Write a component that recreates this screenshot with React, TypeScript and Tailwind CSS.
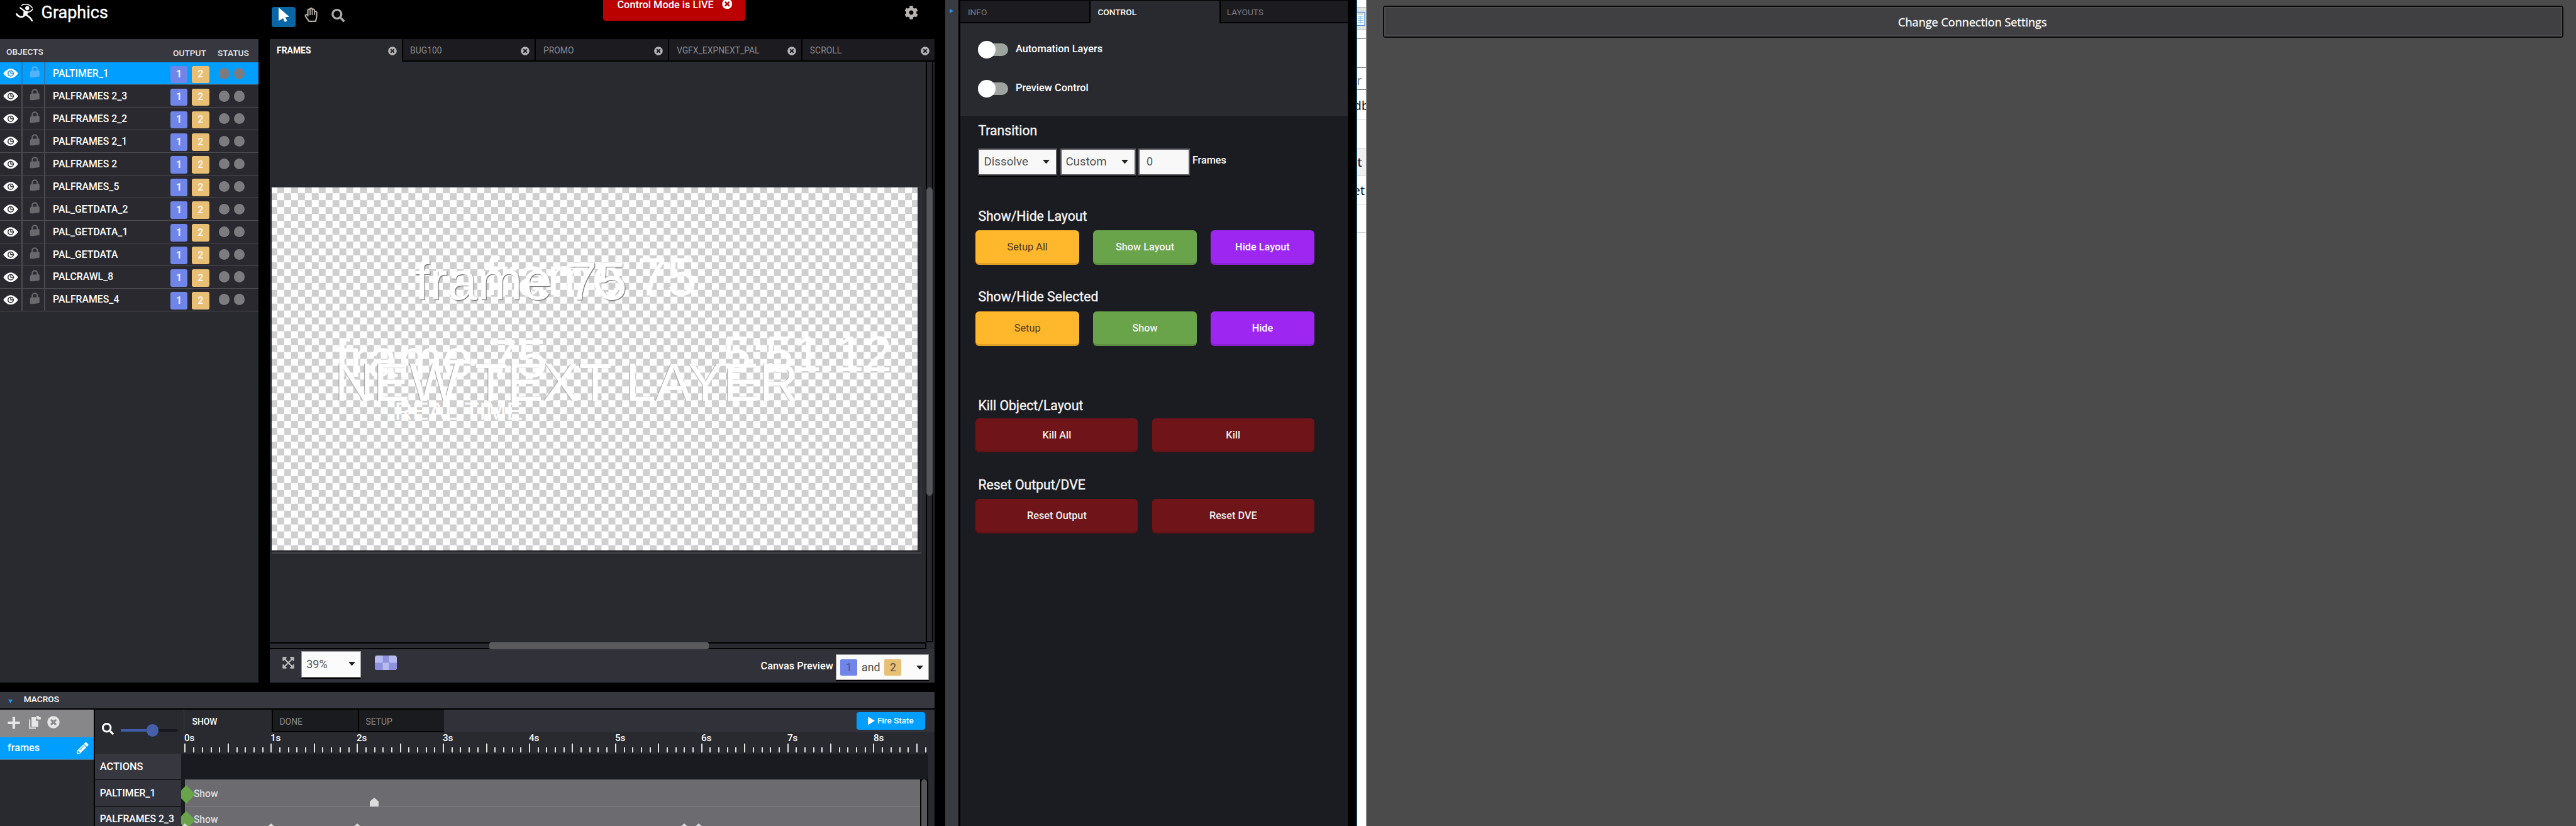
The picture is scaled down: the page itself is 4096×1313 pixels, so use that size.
import React from "react";
import {
  FaCog,
  FaExpandArrowsAlt,
  FaPencilAlt,
  FaPlus,
  FaRegHandPaper,
  FaSearch,
  FaTimesCircle,
} from "react-icons/fa";

const objects = [
  "PALTIMER_1",
  "PALFRAMES 2_3",
  "PALFRAMES 2_2",
  "PALFRAMES 2_1",
  "PALFRAMES 2",
  "PALFRAMES_5",
  "PAL_GETDATA_2",
  "PAL_GETDATA_1",
  "PAL_GETDATA",
  "PALCRAWL_8",
  "PALFRAMES_4",
];

function Runner() {
  return (
    <svg viewBox="0 0 33 33" className="h-[28px] w-[28.5px] shrink-0" fill="none" stroke="#fff" strokeLinecap="round" strokeLinejoin="round">
      <path d="M11 3C15 -0.5 26 0 31 8" strokeWidth="1.8" />
      <circle cx="21.3" cy="8.300" r="3.800" fill="#fff" stroke="none" />
      <path d="M8 7.500L16 13.500" strokeWidth="2.600" />
      <path d="M31 10.500C29 14 25 15.500 21 16" strokeWidth="2.200" />
      <path d="M15.500 13.500L22 15L20 20.500L15 22Z" fill="#fff" strokeWidth="2.200" />
      <path d="M15.500 22.500C12 26 5 25.500 1.500 19.500" strokeWidth="3.200" />
      <path d="M19.500 21C23 23 28 26 30 31.500" strokeWidth="3.200" />
    </svg>
  );
}

function Eye({ active }: { active: boolean }) {
  const hole = active ? "#1c8fdf" : "#2a2a30";
  return (
    <svg viewBox="0 0 28 18" className="h-[15.6px] w-[24px]">
      <path d="M0.3 9C5 2.5 9.500 0.300 14 0.300S23 2.500 27.700 9C23 15.500 18.500 17.700 14 17.700S5 15.500 0.300 9Z" fill="#fff" />
      <circle cx="14" cy="9" r="5" fill="none" stroke={hole} strokeWidth="1.8" />
      <path d="M14 5.500V9H17.500" fill="none" stroke={hole} strokeWidth="1.600" />
    </svg>
  );
}

function Lock({ active }: { active: boolean }) {
  const color = active ? "#54b2f6" : "#69696d";
  return (
    <svg viewBox="0 0 19 22" className="h-[18.800px] w-[16.300px]">
      <path d="M5 11V6.500C5 3.500 7 1.500 9.500 1.500S14.500 3.500 14.500 6.500V11" fill="none" stroke={color} strokeWidth="2.600" />
      <path d="M1 11L2.500 9L17.500 8.500L18.500 10V19L17 20L6 21.500H2L0.500 20Z" fill={color} />
    </svg>
  );
}

function Caret({ className = "" }: { className?: string }) {
  return (
    <svg viewBox="0 0 10 6" className={"h-[6.500px] w-[11px] shrink-0 " + className}>
      <path d="M0 0H10L5 6Z" fill="#222" />
    </svg>
  );
}

function ObjectRow({ name, active }: { name: string; active: boolean }) {
  return (
    <div className={"flex h-[35.960px] border-b-[1.700px] border-[#4c4c50] " + (active ? "bg-[#009fff]" : "bg-[#29292f]")}>
      <div className={"flex w-[36px] items-center justify-center border-r-2 " + (active ? "border-[#2c78b4]" : "border-[#4c4c50]")}>
        <Eye active={active} />
      </div>
      <div className={"flex w-[36px] items-center justify-center border-r-2 pb-[4px] pl-[5px] " + (active ? "border-[#2c78b4]" : "border-[#4c4c50]")}>
        <Lock active={active} />
      </div>
      <div className="flex w-[198.800px] items-center pl-[12px] text-[15.800px] leading-none font-medium text-white">{name}</div>
      <div className="mt-[5.300px] flex h-[27.400px] w-[27.400px] items-center justify-center rounded-[3px] bg-[#7085e8] text-[16px] leading-none font-bold text-[#e4f4ff]">1</div>
      <div className="mt-[5.300px] ml-[6.600px] flex h-[27.400px] w-[28px] items-center justify-center rounded-[3px] bg-[#e8bf74] text-[16px] leading-none font-bold text-[#f8f1e6]">2</div>
      <div className="mt-[8.600px] ml-[14.800px] flex gap-[6.300px]">
        <div className="h-[17.700px] w-[17.700px] rounded-full bg-[#7c7c80]" />
        <div className="h-[17.700px] w-[17.700px] rounded-full bg-[#7c7c80]" />
      </div>
    </div>
  );
}

function ObjectsPanel() {
  return (
    <div className="flex w-[411.300px] flex-col bg-[#292a2f] text-white">
      <div className="flex h-[37.300px] shrink-0 bg-[#37373f] pt-[13.800px] text-[13.700px] leading-none font-medium text-[#e6e6e6]">
        <span className="w-[275px] pl-[10px]">OBJECTS</span>
        <span className="w-[71px] pt-[2px]">OUTPUT</span>
        <span className="pt-[2px]">STATUS</span>
      </div>
      {objects.map((o, i) => (
        <ObjectRow key={o} name={o} active={i === 0} />
      ))}
    </div>
  );
}

const layoutTabs = ["FRAMES", "BUG100", "PROMO", "VGFX_EXPNEXT_PAL", "SCROLL"];

function LayoutTabs() {
  return (
    <div className="flex h-[36px] shrink-0">
      {layoutTabs.map((t, i) => (
        <div
          key={t}
          className={
            "flex flex-1 items-center justify-between pr-[8px] " +
            (i === 0
              ? "bg-[#292a2f] pl-[11.500px] font-bold text-white"
              : "border-b-2 border-l-2 border-black bg-[#1b1b20] pl-[11.500px] text-[#8a8a8e]")
          }
        >
          <span className={"text-[13.900px] leading-none " + (i === 0 ? "mt-[2px]" : "mt-[4px]")}>{t}</span>
          <FaTimesCircle className={"text-[14px] text-[#b4b4b6] " + (i === 0 ? "mt-[2px]" : "mt-[4px]")} />
        </div>
      ))}
    </div>
  );
}

function Canvas() {
  return (
    <div className="relative h-[577px] w-[1027.700px] overflow-hidden bg-[conic-gradient(#cfcfcf_25%,#fff_0_50%,#cfcfcf_0_75%,#fff_0)] bg-[length:21.940px_21.940px] bg-[position:-2px_-1.800px] font-['Liberation_Sans',sans-serif] text-[85.500px] leading-none whitespace-nowrap text-white">
      <span className="absolute top-[99.700px] left-[339px]">frame 75</span>
      <span className="absolute top-[106.800px] left-[228px] [text-shadow:1px_1px_1px_#666]">frame 75</span>
      <span className="absolute top-[229.500px] left-[101px]">frame 75</span>
      <span className="absolute top-[267.500px] left-[101px] [text-shadow:-1px_0_1px_#999]">NEW TEXT LAYER</span>
      <span className="absolute top-[224.500px] left-[718px] text-[80.500px]">5:51.12</span>
      <span className="absolute top-[336.800px] left-[196px] text-[39px]">REAL TIME</span>
    </div>
  );
}

function CanvasPanel() {
  return (
    <div className="flex w-[1057.700px] flex-col bg-[#292a2f]">
      <LayoutTabs />
      <div className="flex h-[922.900px] shrink-0">
        <div className="w-[1043.900px] pt-[198.600px]">
          <div className="w-[1036px] border-t-[1.500px] border-[#4a4a50] pl-[3px]">
            <div className="w-[1033px] border-r-[1.500px] border-b-[2px] border-[#45464b] pb-[2px]">
              <div className="w-[1028.700px] border-b border-black">
                <Canvas />
              </div>
            </div>
          </div>
        </div>
        <div className="w-[12px] border-x-2 border-b-2 border-black bg-[#27282c] pt-[200px]">
          <div className="-mx-px h-[490px] rounded-full bg-[#55565a]" />
        </div>
      </div>
      <div className="flex h-[11px] shrink-0">
        <div className="flex w-[1044px] border-y-2 border-r-2 border-black bg-[#292a30] pl-[349.400px]">
          <div className="-my-[2px] w-[349px] rounded-[3px] bg-[#5a5a5c]" />
        </div>
        <div className="flex-1 bg-[#2b2b34]" />
      </div>
      <div className="flex flex-1 items-start bg-[#31313a]">
        <FaExpandArrowsAlt className="mt-[11.500px] ml-[19px] text-[21px] text-[#b9b9b6]" />
        <div className="mt-[3px] ml-[10.600px] flex h-[42.500px] w-[95px] items-center justify-between border border-[#999] bg-[#fbfbfb] pr-[8px] pb-[1px] pl-[7px] text-[18px] leading-none text-[#555] shadow-[0_2px_0_#000]">
          39%
          <Caret />
        </div>
        <svg viewBox="0 0 36 24" preserveAspectRatio="none" className="mt-[10px] ml-[22px] h-[23px] w-[35px]">
          <clipPath id="checker-clip">
            <rect width="36" height="24" rx="4" />
          </clipPath>
          <g clipPath="url(#checker-clip)">
            <rect width="36" height="24" fill="#b6baef" />
            <path d="M13 0H23V12H13ZM0 12H13V24H0ZM23 12H36V24H23Z" fill="#8f91df" />
          </g>
        </svg>
        <div className="mt-[19.500px] ml-auto text-[16.300px] leading-none font-medium text-white">Canvas Preview</div>
        <div className="mt-[8.500px] mr-[9.500px] ml-[4px] flex h-[41px] w-[148px] items-center border border-[#999] bg-[#fbfbfb] pl-[6.500px] text-[17.800px] leading-none text-[#4a4a4e] shadow-[0_2px_0_#000]">
          <div className="flex h-[26.500px] w-[27px] items-center justify-center rounded-[2px] bg-[#7085e8] text-[#4458a8]">1</div>
          <span className="mx-[6.800px]">and</span>
          <div className="flex h-[26.500px] w-[27px] items-center justify-center rounded-[2px] bg-[#e8bf74]">2</div>
          <Caret className="ml-[24px]" />
        </div>
      </div>
    </div>
  );
}

function TopBar() {
  return (
    <div className="flex h-[62px] shrink-0 items-start">
      <div className="flex w-[432px] items-start pt-[5.700px] pl-[25px]">
        <Runner />
        <div className="ml-[12px] pt-[1px] text-[27px] leading-none text-white [-webkit-text-stroke:0.400px_white]">Graphics</div>
      </div>
      <div className="mt-[10.600px] flex h-[32.500px] w-[37.500px] items-start justify-center rounded-[4px] bg-[#0b66a5] pt-[1px] text-white">
        <svg viewBox="0 0 17 23" className="ml-[2px] h-[23px] w-[17px]">
          <path d="M0 0L17 14.500L10.500 15.500L13.500 21L10 23L7 17L3 19.500L0 21Z" fill="#fff" />
        </svg>
      </div>
      <FaRegHandPaper className="mt-[12px] ml-[13px] h-[23px] w-[23px] text-[#b4aca6]" />
      <FaSearch className="mt-[14px] ml-[21px] h-[21px] w-[21.500px] text-[#aeaaa8]" />
      <div className="ml-[410.500px] flex h-[33.100px] w-[226.300px] rounded-b-[4px] bg-[#bb0000] pl-[22.900px] text-white">
        <span className="text-[16.400px] leading-none font-medium">Control Mode is LIVE</span>
        <FaTimesCircle className="-mt-[2.500px] ml-[13px] text-[16.500px]" />
      </div>
      <FaCog className="mt-[9px] ml-[253px] text-[22px] text-[#b8b4b2]" />
    </div>
  );
}

const stateTabs = ["DONE", "SETUP"];
const seconds = ["0s", "1s", "2s", "3s", "4s", "5s", "6s", "7s", "8s"];
const ticks = Array.from({ length: 87 }, (_, i) => i);

function Track({ first = false, markers }: { first?: boolean; markers: number[] }) {
  return (
    <div className={"relative overflow-hidden " + (first ? "h-[43.500px]" : "h-[31px]")}>
      <div className="ml-[5.500px] flex h-full w-[1169.200px] border-b border-[#7d7d82] bg-[#6b6b70]">
        <span className={"pl-[14.200px] text-[15.700px] leading-none font-medium text-[#dedede] " + (first ? "pt-[14.500px]" : "pt-[12.300px]")}>Show</span>
      </div>
      <svg viewBox="0 0 28.400 29.400" className={"absolute -left-[6px] h-[29.400px] w-[28.400px] " + (first ? "top-[8.800px]" : "top-[6.500px]")}>
        <path d="M14.200 0L28.400 14.700L14.200 29.400L0 14.700Z" fill="#6aa44a" />
      </svg>
      {markers.map((x) => (
        <svg key={x} viewBox="0 0 16 14" className={"absolute h-[14px] w-[16px] " + (first ? "top-[28.800px]" : "top-[26.300px]")} style={{ left: x - 8 }}>
          <path d="M8 0L15 6V14H1V6Z" fill="#dcdcdc" />
        </svg>
      ))}
    </div>
  );
}

function MacrosPanel() {
  return (
    <div className="flex h-[213.400px] w-[1486.300px] flex-col bg-[#292a2f] text-white">
      <div className="flex h-[28.600px] shrink-0 items-center border-b-2 border-black bg-[#37373f] pl-[12.700px]">
        <svg viewBox="0 0 7 6" className="mt-[5px] h-[6px] w-[7px]">
          <path d="M0 0H7L3.500 6Z" fill="#1d9bf5" />
        </svg>
        <span className="ml-[18px] pb-[2px] text-[13.700px] leading-none font-medium">MACROS</span>
      </div>
      <div className="flex flex-1">
        <div className="w-[151.200px] border-r-2 border-black">
          <div className="flex h-[44.200px] items-start gap-[12.500px] bg-[#87878a] pt-[10px] pl-[10.500px] text-[#e6e6e6]">
            <FaPlus className="h-[22px] w-[22px]" />
            <svg viewBox="0 0 20 22" className="h-[21.500px] w-[20px]" fill="#e6e6e6">
              <path d="M1 6H3V19H12V21H1Z" />
              <path d="M5 2H12V8H16V18H5Z" />
              <path d="M13 0H17V2H20V6H17L13 5Z" />
            </svg>
            <FaTimesCircle className="-ml-[3px] h-[20px] w-[20px]" />
          </div>
          <div className="flex h-[35.200px] items-center justify-between border-b-[1.500px] border-[#5a6a78] bg-[#009fff] pr-[8.500px] pl-[12px] text-[16.200px] leading-none font-medium">
            frames
            <FaPencilAlt className="text-[18.500px]" />
          </div>
        </div>
        <div className="flex w-[1335.100px] flex-col">
          <div className="flex h-[69.900px] shrink-0">
            <div className="flex w-[142.300px] items-start border-r border-[#3c3d43] pl-[11px]">
              <FaSearch className="mt-[21px] h-[19px] w-[19px]" />
              <div className="mt-[23px] ml-[10.500px] flex h-[19px] items-center">
                <div className="h-[4px] w-[41px] bg-[#3f5da6]" />
                <div className="h-[20px] w-[19.500px] rounded-full bg-[#4560a8]" />
                <div className="h-[4px] w-[29.500px] bg-[#17181c]" />
              </div>
            </div>
            <div className="flex w-[1192.800px] flex-col">
              <div className="flex h-[35.700px] bg-[#31313a] text-[13.900px] leading-none">
                <div className="w-[139px] bg-[#292a2f] pt-[12.500px] pl-[12px] font-medium">SHOW</div>
                {stateTabs.map((t) => (
                  <div key={t} className="w-[137px] border-b-2 border-l-2 border-black bg-[#1a1b1f] pt-[12.500px] pl-[10px] text-[#8a8a8e]">
                    {t}
                  </div>
                ))}
                <div className="mt-[3.700px] mr-[15.700px] ml-auto flex h-[28.600px] w-[108.600px] items-center justify-center gap-[4px] rounded-[4px] bg-[#009fff] text-[13.500px] font-medium">
                  <svg viewBox="0 0 11 14" className="h-[13.500px] w-[11px]">
                    <path d="M0 0L11 7L0 14Z" fill="#fff" />
                  </svg>
                  Fire State
                </div>
              </div>
              <div className="-ml-[0.500px] flex h-[18px] overflow-hidden">
                {seconds.map((s) => (
                  <div key={s} className="w-[137px] shrink-0 text-[15.200px] leading-[18px] font-medium">
                    {s}
                  </div>
                ))}
              </div>
              <div className="flex h-[14px] items-end overflow-hidden">
                {ticks.map((i) => (
                  <div key={i} className={"w-[13.700px] shrink-0 border-l-2 border-[#e2e2e2] " + (i % 5 === 0 ? "h-[14px]" : "h-[7.500px]")} />
                ))}
              </div>
            </div>
          </div>
          <div className="flex flex-1">
            <div className="w-[137px] bg-[#17181c] text-[15.800px] leading-none font-medium">
              <div className="mb-[2px] h-[39.800px] bg-[#37373f] pt-[12.500px] pl-[7.600px] text-[16.400px]">ACTIONS</div>
              <div className="mb-[2px] h-[41.500px] bg-[#33333b] pt-[13.500px] pl-[7.600px]">PALTIMER_1</div>
              <div className="h-[31px] bg-[#33333b] pt-[11px] pl-[7.600px]">PALFRAMES 2_3</div>
            </div>
            <div className="w-[1188px] bg-[#1a1b20]">
              <div className="h-[41.300px]" />
              <div className="flex">
                <div className="w-[1174.700px]">
                  <Track first markers={[307.2]} />
                  <Track markers={[5.4, 143, 279.7, 800.2, 822.8]} />
                </div>
                <div className="flex-1 border-x-2 border-black bg-black">
                  <div className="h-[80px] rounded-t-full bg-[#55565a]" />
                </div>
              </div>
            </div>
          </div>
        </div>
      </div>
    </div>
  );
}

function Toggle({ label }: { label: string }) {
  return (
    <div className="flex h-[28.200px] items-center">
      <div className="flex h-[20px] w-[48.400px] items-center rounded-full bg-[#9ea5a0]">
        <div className="h-[28.200px] w-[28.200px] shrink-0 rounded-full bg-white" />
      </div>
      <span className="ml-[12px] pb-[2px] text-[16.400px] leading-none font-medium text-white">{label}</span>
    </div>
  );
}

function Action({ label, tone }: { label: string; tone: string }) {
  return (
    <div className={"flex h-[54.800px] flex-1 items-center justify-center rounded-[6px] text-[16.300px] leading-none shadow-[inset_0_-3px_0_rgba(0,0,0,0.12)] " + tone}>
      {label}
    </div>
  );
}

function Heading({ children }: { children: string }) {
  return <h2 className="pl-[4px] text-[21.200px] leading-[21px] text-[#f4f4f4] [-webkit-text-stroke:0.400px_#f4f4f4]">{children}</h2>;
}

function ControlPanel() {
  return (
    <div className="flex w-[616.100px] flex-col bg-[#1b1c21]">
      <div className="flex h-[36.500px] shrink-0 border-t border-black text-[13.700px] leading-none">
        <div className="w-[207px] border-r-2 border-b-2 border-black bg-[#1b1b20] pt-[12px] pl-[11.500px] text-[#7e7e82]">INFO</div>
        <div className="w-[204.300px] bg-[#292a2f] pt-[12px] pl-[11px] font-medium text-white">CONTROL</div>
        <div className="flex-1 border-b-2 border-l-2 border-black bg-[#1b1b20] pt-[12px] pl-[10px] text-[#7e7e82]">LAYOUTS</div>
      </div>
      <div className="flex h-[147.200px] shrink-0 flex-col gap-[33.600px] bg-[#292a2f] pt-[28.400px] pl-[27.200px]">
        <Toggle label="Automation Layers" />
        <Toggle label="Preview Control" />
      </div>
      <div className="w-[562.400px] pt-[13px] pl-[24px]">
        <Heading>Transition</Heading>
        <div className="mt-[18px] flex pl-[4px] text-[18.800px] leading-none text-[#555]">
          <div className="flex h-[43px] w-[126px] items-center justify-between border-2 border-[#55555a] bg-[#f8f8f8] pr-[10.500px] pl-[7px] shadow-[0_2px_0_#000]">
            Dissolve <Caret />
          </div>
          <div className="ml-[4.500px] flex h-[43px] w-[120.500px] items-center justify-between border-2 border-[#55555a] bg-[#f8f8f8] pr-[10px] pl-[6.500px] shadow-[0_2px_0_#000]">
            Custom <Caret />
          </div>
          <div className="ml-[4px] flex h-[43px] w-[81.500px] items-center border-2 border-[#55555a] bg-[#f8f8f8] pl-[10.500px] text-[18px] shadow-[0_2px_0_#000]">0</div>
          <span className="mt-[11px] ml-[4px] text-[16.200px] font-medium text-white">Frames</span>
        </div>
        <div className="mt-[54.500px]">
          <Heading>Show/Hide Layout</Heading>
        </div>
        <div className="mt-[12px] flex gap-[22.300px]">
          <Action label="Setup All" tone="bg-[#ffb72b] text-[#4c3820]" />
          <Action label="Show Layout" tone="bg-[#6aa44a] font-medium text-[#f2f2f2]" />
          <Action label="Hide Layout" tone="bg-[#9d26f0] font-medium text-white" />
        </div>
        <div className="mt-[40.500px]">
          <Heading>Show/Hide Selected</Heading>
        </div>
        <div className="mt-[12.300px] flex gap-[22.300px]">
          <Action label="Setup" tone="bg-[#ffb72b] text-[#4c3820]" />
          <Action label="Show" tone="bg-[#6aa44a] font-medium text-[#f2f2f2]" />
          <Action label="Hide" tone="bg-[#9d26f0] font-medium text-white" />
        </div>
        <div className="mt-[84px]">
          <Heading>Kill Object/Layout</Heading>
        </div>
        <div className="mt-[10px] flex gap-[22.300px]">
          <Action label="Kill All" tone="bg-[#6f1519] font-medium text-[#f0f0f0]" />
          <Action label="Kill" tone="bg-[#6f1519] font-medium text-[#f0f0f0]" />
        </div>
        <div className="mt-[40.200px]">
          <Heading>Reset Output/DVE</Heading>
        </div>
        <div className="mt-[12.600px] flex gap-[22.300px]">
          <Action label="Reset Output" tone="bg-[#6f1519] font-medium text-[#f0f0f0]" />
          <Action label="Reset DVE" tone="bg-[#6f1519] font-medium text-[#f0f0f0]" />
        </div>
      </div>
    </div>
  );
}

function SheetSliver() {
  return (
    <div className="flex w-[15.700px] flex-col overflow-hidden border-r border-l-[1.500px] border-r-[#999] border-l-[#1681d0] bg-white font-['Noto_Sans',sans-serif] text-[20.500px] leading-none whitespace-nowrap text-[#15151c]">
      <div className="h-[11px] shrink-0" />
      <div className="h-[36.500px] shrink-0 border-y border-[#b4b4b4] bg-[#e3e3e3] pt-[6px]">
        <svg viewBox="0 0 14 24" className="h-[24px] w-[13px]">
          <rect x="-2" y="0.700" width="15" height="22.500" fill="#fff" stroke="#4a90dd" strokeWidth="1.400" />
          <path d="M1 3.500H11" stroke="#9a9a78" strokeWidth="1.200" />
          <path d="M1 7.500H11M1 11H11M1 14.500H11M1 18H11M5.500 7V20" stroke="#8cc4e4" strokeWidth="1.200" />
        </svg>
      </div>
      <div className="h-[14px] shrink-0 border-b-[1.500px] border-[#777]" />
      <div className="h-[46.500px] shrink-0 border-b-[1.500px] border-[#777]" />
      <div className="h-[35.300px] shrink-0 border-b-[1.500px] border-[#666] pt-[9px] text-[#888]">
        <span className="-ml-[1px]">r</span>
      </div>
      <div className="h-[48px] shrink-0 border-b border-[#d4d4d4] pt-[14px]">
        <span className="-ml-[6px]">db</span>
      </div>
      <div className="h-[44.700px] shrink-0 border-b border-[#d4d4d4]" />
      <div className="h-[44.400px] shrink-0 border-b border-[#d4d4d4] bg-[#f0f0f0] pt-[11.500px]">t</div>
      <div className="h-[44.400px] shrink-0 border-b border-[#d4d4d4] pt-[11.500px]">
        <span className="-ml-[7px]">et</span>
      </div>
      <div className="h-[44.800px] shrink-0 border-b border-[#d4d4d4]" />
    </div>
  );
}

export default function App() {
  return (
    <div className="flex h-[1313px] w-[4096px] overflow-hidden bg-black font-['Roboto',sans-serif] whitespace-nowrap">
      <div className="flex w-[1503.200px] shrink-0 flex-col">
        <TopBar />
        <div className="flex h-[1023.100px] shrink-0 gap-[17.300px]">
          <ObjectsPanel />
          <CanvasPanel />
        </div>
        <div className="h-[14.500px] shrink-0" />
        <MacrosPanel />
      </div>
      <div className="mr-[3.600px] w-[20.600px] shrink-0 bg-[#3a3a42] pt-[13.500px] pl-[7px]">
        <svg viewBox="0 0 6 7" className="h-[7px] w-[6px]">
          <path d="M0 0L6 3.500L0 7Z" fill="#1d9bf5" />
        </svg>
      </div>
      <ControlPanel />
      <div className="w-[13.700px] shrink-0" />
      <SheetSliver />
      <div className="flex-1 bg-[#4b4b4b] pt-[9.100px] pr-[19.600px] pl-[26.400px]">
        <div className="rounded-[4px] border-2 border-[#0a0a0a]">
          <div className="flex h-[47.300px] items-center justify-center border-2 border-[#4d4d4f] bg-[#404042] pr-[3px] font-['Open_Sans',sans-serif] text-[18.100px] leading-none text-white [-webkit-text-stroke:0.300px_white]">
            Change Connection Settings
          </div>
        </div>
      </div>
    </div>
  );
}
